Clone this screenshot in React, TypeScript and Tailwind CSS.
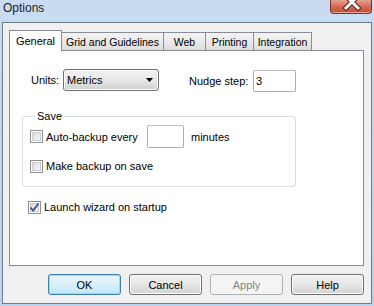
import React from "react";

const font = { fontFamily: '"Liberation Sans", Arial, sans-serif' };

function CheckBox({ checked }: { checked?: boolean }) {
  return (
    <span className="flex h-[13px] w-[13px] shrink-0 items-center justify-center border border-[#8e8f8f] bg-white">
      <span className="relative flex h-[9px] w-[9px] items-center justify-center border border-[#c9cbd0] bg-gradient-to-br from-[#dcdcdc] to-[#f7f7f7]">
        {checked && (
          <svg width="11" height="11" viewBox="0 0 11 11" className="absolute">
            <path d="M1.5 5.5 L4.2 8.5 L9.5 1.5" fill="none" stroke="#3a4f82" strokeWidth="1.8" />
          </svg>
        )}
      </span>
    </span>
  );
}

function CheckRow({ checked, label, width }: { checked?: boolean; label: string; width?: string }) {
  return (
    <label className={`flex items-center gap-[3px] ${width ?? ""}`}>
      <CheckBox checked={checked} />
      <span className="leading-[14px]">{label}</span>
    </label>
  );
}

function Tab({ label, selected, width }: { label: string; selected?: boolean; width: string }) {
  if (selected) {
    return (
      <div
        className={`relative z-10 -mb-[1px] flex h-[21px] ${width} items-start justify-center border border-b-0 border-[#898c95] bg-white pt-[3px] text-[11px] leading-[14px]`}
      >
        {label}
      </div>
    );
  }
  return (
    <div
      className={`flex h-[18px] ${width} items-start justify-center border border-b-0 border-l-0 border-[#898c95] bg-gradient-to-b from-[#f3f3f3] via-[#ebebeb] to-[#dcdcdc] pt-[3px] text-[10.5px] leading-[13px]`}
    >
      {label}
    </div>
  );
}

function Button({ label, kind }: { label: string; kind?: "default" | "disabled" }) {
  const base = "flex h-[21px] w-[73px] items-center justify-center rounded-[3px] border text-[11px] leading-[14px]";
  if (kind === "default") {
    return (
      <button className={`${base} border-[#3c7fb1] bg-gradient-to-b from-[#eaf6fd] via-[#d9f0fc] to-[#bee6fd] shadow-[inset_0_0_0_1px_#9bdaf7]`}>
        {label}
      </button>
    );
  }
  if (kind === "disabled") {
    return <button className={`${base} border-[#adb2b5] bg-[#f4f4f4] text-[#838383]`}>{label}</button>;
  }
  return (
    <button className={`${base} border-[#707070] bg-gradient-to-b from-[#f2f2f2] via-[#e6e6e6] to-[#d3d3d3] shadow-[inset_0_0_0_1px_#fcfcfc]`}>
      {label}
    </button>
  );
}

export default function App() {
  return (
    <div
      className="flex h-[306px] w-[374px] flex-col overflow-hidden bg-gradient-to-b from-[#c9dcf2] via-[#c1d5ee] to-[#bcd2ec] text-[11px] text-black"
      style={font}
    >
      {/* title bar */}
      <div className="flex h-[22px] items-start justify-between">
        <span className="pl-[3px] pt-[1px] text-[12px] leading-[14px] text-[#1e1e1e]">Options</span>
        <div className="mr-[2px] h-[14px] w-[42px] overflow-hidden rounded-b-[4px] border border-t-0 border-[#7b3128] bg-gradient-to-b from-[#e7a191] via-[#d46b57] to-[#c24733] shadow-[inset_0_-1px_0_#e9a99a]">
          <svg width="42" height="14" viewBox="0 0 42 14">
            <path d="M15 -4 L27 8 M27 -4 L15 8" stroke="#5a1f18" strokeWidth="5" strokeLinecap="square" />
            <path d="M15 -4 L27 8 M27 -4 L15 8" stroke="#ffffff" strokeWidth="3" strokeLinecap="square" />
          </svg>
        </div>
      </div>

      {/* client area */}
      <div className="mx-[2px] mb-[2px] flex flex-1 flex-col border border-[#6f7b88] bg-[#f0f0f0] pl-[6px] pr-[7px] pt-[7px]">
        <div className="flex h-[20px] items-end">
          <Tab label="General" selected width="w-[53px]" />
          <Tab label="Grid and Guidelines" width="w-[102px]" />
          <Tab label="Web" width="w-[42px]" />
          <Tab label="Printing" width="w-[48px]" />
          <Tab label="Integration" width="w-[58px]" />
        </div>

        <div className="flex h-[216px] flex-col border border-[#898c95] bg-white pl-[12px] pt-[18px]">
          <div className="flex items-start">
            <span className="ml-[9px] w-[32px] pt-[4px] leading-[14px]">Units:</span>
            <div className="flex h-[22px] w-[96px] items-center justify-between rounded-[3px] border border-[#707070] bg-gradient-to-b from-[#f2f2f2] via-[#e8e8e8] to-[#d0d0d0] pl-[3px] pr-[4px] shadow-[inset_0_0_0_1px_#fbfbfb]">
              <span className="leading-[14px]">Metrics</span>
              <svg width="8" height="5" viewBox="0 0 8 5">
                <path d="M0 0 H7 L3.5 4 Z" fill="#000" />
              </svg>
            </div>
            <span className="ml-[30px] w-[64px] pt-[5px] leading-[14px]">Nudge step:</span>
            <div className="mt-[1px] flex h-[22px] w-[43px] items-center rounded-[2px] border border-[#abadb3] border-t-[#b9bcc2] pl-[2px] leading-[14px]">
              3
            </div>
          </div>

          <fieldset className="mt-[17px] w-[274px] rounded-[3px] border border-[#d5dfe5] pb-[13px] pl-[7px]">
            <legend className="ml-[5px] px-[2px] leading-[14px]">Save</legend>
            <div className="mt-[2px] flex items-center">
              <CheckRow label="Auto-backup every" width="w-[117px]" />
              <div className="h-[23px] w-[37px] rounded-[2px] border border-[#abadb3] border-t-[#b9bcc2] bg-white" />
              <span className="ml-[7px] leading-[14px]">minutes</span>
            </div>
            <div className="mt-[11px]">
              <CheckRow label="Make backup on save" />
            </div>
          </fieldset>

          <div className="ml-[6px] mt-[13px]">
            <CheckRow checked label="Launch wizard on startup" />
          </div>
        </div>

        <div className="mt-[8px] flex justify-end gap-[8px]">
          <Button label="OK" kind="default" />
          <Button label="Cancel" />
          <Button label="Apply" kind="disabled" />
          <Button label="Help" />
        </div>
      </div>
    </div>
  );
}
